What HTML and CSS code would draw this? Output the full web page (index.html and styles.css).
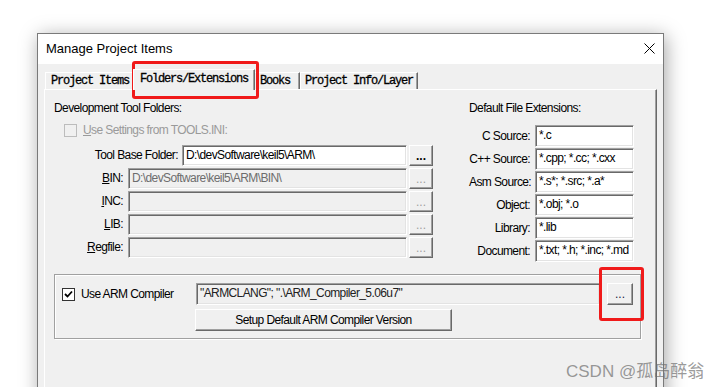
FILE: index.html
```html
<!DOCTYPE html>
<html lang="en">
<head>
    <meta charset="UTF-8">
    <title>Manage Project Items</title>
    <link rel="stylesheet" href="styles.css">
</head>
<body>
    <div class="dialog">
        <div class="titlebar">
            <span class="title">Manage Project Items</span>
            <svg class="close" width="11" height="11" viewBox="0 0 11 11">
                <path d="M0.5 0.5 L10.5 10.5 M10.5 0.5 L0.5 10.5" stroke="#000" stroke-width="1" fill="none"/>
            </svg>
        </div>
        <div class="client">
            <div class="tabs">
                <div class="tab">Project Items</div>
                <div class="tab active">Folders/Extensions</div>
                <div class="tab tab-books">Books</div>
                <div class="tab tab-info">Project Info/Layer</div>
            </div>
            <div class="panel">
                <div class="columns">
                    <div class="folders">
                        <div class="heading">Development Tool Folders:</div>
                        <div class="check disabled">
                            <span class="box"></span>
                            <span><u>U</u>se Settings from TOOLS.INI:</span>
                        </div>
                        <div class="folder-grid">
                            <span class="lbl wide">Tool Base Folder:</span>
                            <div class="field">D:\devSoftware\keil5\ARM\</div>
                            <div class="btn bold">...</div>

                            <span class="lbl"><u>B</u>IN:</span>
                            <div class="field off long">D:\devSoftware\keil5\ARM\BIN\</div>
                            <div class="btn off">...</div>

                            <span class="lbl"><u>I</u>NC:</span>
                            <div class="field off long"></div>
                            <div class="btn off">...</div>

                            <span class="lbl"><u>L</u>IB:</span>
                            <div class="field off long"></div>
                            <div class="btn off">...</div>

                            <span class="lbl"><u>R</u>egfile:</span>
                            <div class="field off long"></div>
                            <div class="btn off">...</div>
                        </div>
                    </div>
                    <div class="extensions">
                        <div class="heading">Default File Extensions:</div>
                        <div class="ext-grid">
                            <span class="lbl">C Source:</span>
                            <div class="field">*.c</div>
                            <span class="lbl">C++ Source:</span>
                            <div class="field">*.cpp; *.cc; *.cxx</div>
                            <span class="lbl">Asm Source:</span>
                            <div class="field">*.s*; *.src; *.a*</div>
                            <span class="lbl">Object:</span>
                            <div class="field">*.obj; *.o</div>
                            <span class="lbl">Library:</span>
                            <div class="field">*.lib</div>
                            <span class="lbl">Document:</span>
                            <div class="field">*.txt; *.h; *.inc; *.md</div>
                        </div>
                    </div>
                </div>
                <div class="group">
                    <div class="check">
                        <span class="box checked">
                            <svg width="9" height="9" viewBox="0 0 9 9">
                                <path d="M1 4 L3.5 6.5 L8 1.5" stroke="#000" stroke-width="1.8" fill="none"/>
                            </svg>
                        </span>
                        <span>Use ARM Compiler</span>
                    </div>
                    <div class="field ro">"ARMCLANG"; ".\ARM_Compiler_5.06u7"</div>
                    <div class="btn thin">...</div>
                    <div class="btn setup">Setup Default ARM Compiler Version</div>
                </div>
            </div>
        </div>
    </div>

    <div class="mark mark-tab"></div>
    <div class="mark mark-browse"></div>
    <div class="watermark">CSDN @孤岛醉翁</div>
</body>
</html>
```

FILE: styles.css
```css
:root {
    --face: #f0f0f0;
    --shadow: #a0a0a0;
    --dark: #696969;
    --light: #e3e3e3;
}
html, body {
    margin: 0;
    height: 387px;
    overflow: hidden;
}
body {
    background: #fff;
    padding: 33px 0 0 37px;
    box-sizing: border-box;
    font-family: 'Liberation Sans', Arial, sans-serif;
    font-size: 12px;
    color: #000;
    position: relative;
}
.dialog {
    width: 627px;
    height: 420px;
    box-sizing: border-box;
    border: 1px solid #7a7a7a;
    background: var(--face);
    box-shadow: 2px 3px 18px rgba(0,0,0,0.35);
}
.titlebar {
    height: 30px;
    background: #fff;
    display: flex;
    align-items: center;
    justify-content: space-between;
    padding: 0 8px 0 8px;
}
.title {
    font-size: 13px;
    margin-top: -1px;
}
.close {
    margin-top: -1px;
}

/* tabs */
.tabs {
    height: 25px;
    display: flex;
    align-items: flex-end;
    padding-left: 7px;
}
.tab {
    height: 17px;
    box-sizing: border-box;
    padding: 0 5px;
    border-top: 1px solid #fff;
    border-left: 1px solid #fff;
    border-right: 1px solid var(--dark);
    box-shadow: inset -1px 0 0 var(--shadow);
    font-family: 'Liberation Mono', 'Courier New', monospace;
    font-size: 12px;
    letter-spacing: -1.2px;
    -webkit-text-stroke: 0.3px #000;
    line-height: 17px;
    white-space: nowrap;
}
.tab.active {
    height: 21px;
    margin: 0 -2px -1px -2px;
    padding: 0 6px;
    position: relative;
    z-index: 1;
    background: var(--face);
    line-height: 19px;
}
.tab-books {
    padding: 0 9px 0 6px;
}
.tab-info {
    padding: 0 4px;
}

/* panel */
.panel {
    margin-left: 6px;
    width: 613px;
    height: 320px;
    box-sizing: border-box;
    border-top: 1px solid #fff;
    border-left: 1px solid #fff;
    border-right: 1px solid var(--dark);
    box-shadow: inset -1px 0 0 var(--shadow);
    padding: 11px 0 0 9px;
    letter-spacing: -0.6px;
}
.columns {
    display: flex;
    gap: 36px;
}
.folders {
    width: 379px;
}
.extensions {
    width: 165px;
}
.heading {
    height: 14px;
    line-height: 14px;
    white-space: nowrap;
}
.check {
    display: flex;
    align-items: center;
    gap: 6px;
    height: 14px;
    white-space: nowrap;
}
.folders .check {
    margin: 8px 0 0 10px;
}
.check.disabled {
    color: #9a9a9a;
}
.box {
    width: 13px;
    height: 13px;
    box-sizing: border-box;
    border: 1px solid #333;
    background: #fff;
    display: flex;
    align-items: center;
    justify-content: center;
}
.check.disabled .box {
    border-color: #bcbcbc;
    background: var(--face);
}

.folder-grid {
    margin-top: 8px;
    display: grid;
    grid-template-columns: 74px 54px 225px 26px;
    grid-auto-rows: 21px;
    row-gap: 2px;
}
.lbl {
    text-align: right;
    padding-right: 5px;
    line-height: 21px;
    white-space: nowrap;
}
.lbl.wide {
    grid-column: span 2;
    padding-right: 4px;
}
.field.long {
    grid-column: span 2;
}

.field {
    box-sizing: border-box;
    border: 1px solid;
    border-color: var(--shadow) #fff #fff var(--shadow);
    box-shadow: inset 1px 1px 0 var(--dark), inset -1px -1px 0 var(--light);
    background: #fff;
    padding: 0 3px;
    line-height: 18px;
    white-space: nowrap;
    overflow: hidden;
}
.field.off {
    background: var(--face);
    color: #6d6d6d;
}
.field.ro {
    background: var(--face);
    color: #222;
    line-height: 19px;
}

.btn {
    box-sizing: border-box;
    border: 1px solid;
    border-color: #fff var(--dark) var(--dark) #fff;
    box-shadow: inset -1px -1px 0 var(--shadow);
    background: var(--face);
    display: flex;
    align-items: center;
    justify-content: center;
    letter-spacing: 0;
}
.folder-grid .btn {
    margin-left: 2px;
}
.btn.bold {
    font-weight: bold;
}
.btn.off {
    color: #a0a0a0;
}

.ext-grid {
    margin-top: 10px;
    display: grid;
    grid-template-columns: 66px 99px;
    grid-auto-rows: 22px;
    row-gap: 1px;
}
.ext-grid .lbl {
    line-height: 22px;
}

/* compiler group */
.group {
    margin-top: 12px;
    width: 587px;
    box-sizing: border-box;
    border: 1px solid var(--shadow);
    box-shadow: inset 1px 1px 0 #fff, 1px 1px 0 #fff;
    padding: 8px 7px 7px 6px;
    display: grid;
    grid-template-columns: 135px 404px 33px;
    grid-template-rows: 22px 22px;
    row-gap: 4px;
}
.group .check {
    margin-left: 1px;
    height: 22px;
}
.group .btn.thin {
    margin-left: 7px;
    width: 26px;
    color: #1a1a40;
}
.btn.setup {
    grid-column: 2;
    grid-row: 2;
    width: 257px;
    margin-left: -1px;
    letter-spacing: -0.6px;
}

/* annotations */
.mark {
    position: absolute;
    border: 3px solid #f01a1a;
    border-radius: 3px;
    box-sizing: border-box;
}
.mark-tab {
    left: 132px;
    top: 61px;
    width: 127px;
    height: 38px;
}
.mark-browse {
    left: 599px;
    top: 267px;
    width: 45px;
    height: 54px;
}
.watermark {
    position: absolute;
    left: 566px;
    top: 357px;
    font-family: 'Liberation Sans', 'Noto Sans CJK SC', sans-serif;
    font-size: 17px;
    color: rgba(110,110,110,0.7);
    white-space: nowrap;
}
```
